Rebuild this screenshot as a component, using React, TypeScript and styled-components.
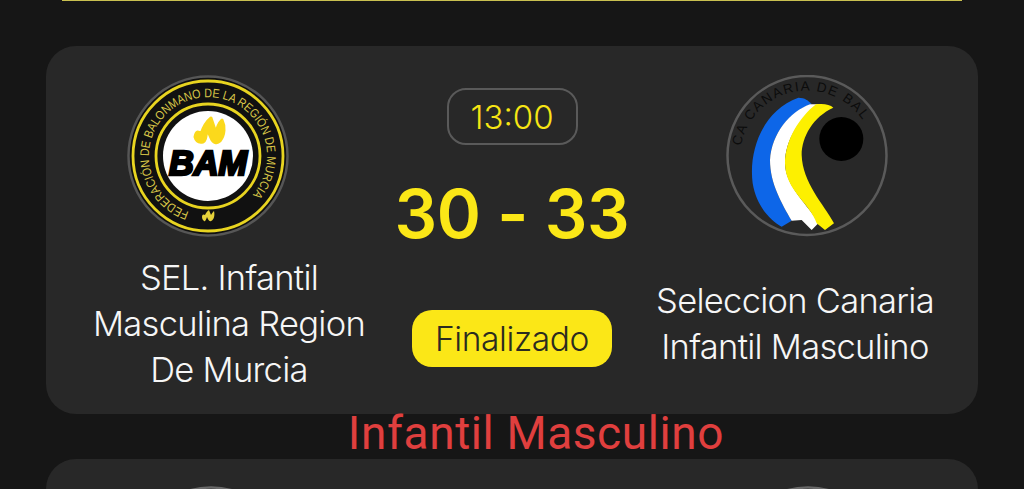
import React from 'react'
import styled, { createGlobalStyle } from 'styled-components'

const GlobalStyle = createGlobalStyle`
  html, body {
    margin: 0;
    height: 100%;
    background: #161616;
    overflow: hidden;
  }
`

const Page = styled.div`
  width: 1024px;
  height: 489px;
  overflow: hidden;
  background: #161616;
  display: flex;
  flex-direction: column;
  align-items: center;
  font-family: Inter, "Noto Sans", sans-serif;
`

// bottom edge of the card scrolled off above
const TopEdge = styled.div`
  flex-shrink: 0;
  width: 900px;
  height: 1px;
  margin-bottom: 45px;
  background: #c9c050;
`

const Card = styled.section`
  flex-shrink: 0;
  box-sizing: border-box;
  width: 932px;
  height: 368px;
  padding: 29px 30px 21px;
  background: #282828;
  border-radius: 30px;
  display: grid;
  grid-template-columns: 1fr 260px 1fr;
`

const NextCard = styled(Card)`
  padding-top: 27px;
`

const TeamColumn = styled.div`
  display: flex;
  flex-direction: column;
  align-items: center;
`

const LogoSlot = styled.div<{ $inset: number }>`
  align-self: flex-start;
  width: 162px;
  height: 162px;
  margin-left: ${(p) => p.$inset}px;
  flex-shrink: 0;
`

const TeamName = styled.div`
  height: 138px;
  margin-top: 18px;
  display: flex;
  align-items: center;
  text-align: center;
  font-size: 34.5px;
  font-weight: 300;
  line-height: 46px;
  letter-spacing: -0.72px;
  white-space: nowrap;
  color: #f6f6f6;
`

const MatchColumn = styled.div`
  display: flex;
  flex-direction: column;
  align-items: center;
  padding-top: 13px;
`

const TimeBox = styled.div`
  box-sizing: border-box;
  width: 131px;
  height: 57px;
  border: 2.5px solid #5a5a5a;
  border-radius: 19px;
  display: flex;
  align-items: center;
  justify-content: center;
  font-size: 33px;
  font-weight: 300;
  color: #f7e514;
`

const Score = styled.div`
  margin-top: 27px;
  font-size: 67px;
  line-height: 84px;
  font-weight: 600;
  letter-spacing: -0.3px;
  white-space: pre;
  color: #fbe717;
`

const StatusPill = styled.div`
  box-sizing: border-box;
  width: 200px;
  height: 57px;
  margin-top: 54px;
  border-radius: 20px;
  background: #fbe717;
  display: flex;
  align-items: center;
  justify-content: center;
  font-size: 33.5px;
  font-weight: 300;
  letter-spacing: -0.4px;
  color: #2b2b20;
`

const CategoryTitle = styled.div`
  flex-shrink: 0;
  height: 45px;
  padding-left: 48px;
  font-family: Roboto, sans-serif;
  font-size: 46px;
  line-height: 39px;
  letter-spacing: 0.6px;
  color: #e03f3e;
  white-space: nowrap;
`

const Svg = styled.svg`
  display: block;
  width: 162px;
  height: 162px;
`

const BamLogo = () => (
  <Svg viewBox="0 0 162 162">
    <defs>
      <path id="bam-arc" d="M62 137 A59 59 0 1 1 100 137" fill="none" />
    </defs>
    <circle cx="81" cy="81" r="79.5" fill="#111" stroke="#565656" strokeWidth="2.5" />
    <circle cx="81" cy="81" r="75" fill="none" stroke="#e8d420" strokeWidth="2.8" />
    <circle cx="81" cy="81" r="52" fill="none" stroke="#e8d420" strokeWidth="2.8" />
    <circle cx="81" cy="81" r="45" fill="#fff" />
    <text fontFamily="'Liberation Sans', sans-serif" fontSize="12.5" fontWeight="400" fill="#d8c648">
      <textPath href="#bam-arc" textLength="300" lengthAdjust="spacingAndGlyphs">
        FEDERACIÓN DE BALONMANO DE LA REGIÓN DE MURCIA
      </textPath>
    </text>
    <path
      d="M68 62 C69 56 71 56 74 59 C76 53 79 47 84 43 L89 58 C90 52 92 48 95 45 C98 51 98 60 93 66 C90 69 86 68 84 63 L80 54 C79 60 79 66 76 67 C71 68 69 66 68 62 Z"
      fill="#fbd91c"
      stroke="#fbd91c"
      strokeWidth="3"
      strokeLinejoin="round"
    />
    <text
      x="81"
      y="100"
      textAnchor="middle"
      fontFamily="'Liberation Sans', sans-serif"
      fontSize="35"
      fontWeight="700"
      fontStyle="italic"
      textLength="78"
      lengthAdjust="spacingAndGlyphs"
      stroke="#000"
      strokeWidth="2.6"
      fill="#000"
    >
      BAM
    </text>
    <path
      d="M75 142 C75 139 77 139 78 140 C79 138 80 136 82 135 L84 140 C85 138 86 137 87 136 C88 140 87 145 84 146 C82 147 81 144 80 142 C79 145 78 147 77 146 C76 145 75 144 75 142 Z"
      fill="#e6d23a"
    />
  </Svg>
)

const CanariaLogo = () => (
  <Svg viewBox="0 0 162 162">
    <defs>
      <path id="canaria-arc" d="M15 71 A67 67 0 0 1 147 71" fill="none" />
    </defs>
    <circle cx="81" cy="80.5" r="79.5" fill="none" stroke="#5a5a5a" strokeWidth="2.5" />
    <text fontFamily="'Liberation Sans', sans-serif" fontSize="13.5" fill="#0c0c0c" letterSpacing="1.6">
      <textPath href="#canaria-arc">CA CANARIA DE BAL</textPath>
    </text>
    <g transform="translate(-16 -15) scale(0.3333)">
      <path
        d="M265 113 C285 113 295 122 305 132 C240 155 185 220 180 300 C180 370 215 430 245 482 L215 500 C180 480 140 440 128 370 C115 270 160 150 265 113 Z"
        fill="#0d66e8"
      />
      <path
        d="M300 133 L335 133 C270 170 225 240 225 310 C225 380 300 440 325 490 L305 510 L275 480 L245 482 C215 430 180 370 180 300 C185 220 240 155 300 133 Z"
        fill="#fff"
      />
      <path
        d="M318 133 C340 130 360 133 370 143 C310 170 275 230 275 285 C278 370 340 430 372 490 L345 510 L320 490 C300 430 225 390 225 310 C225 240 270 170 318 133 Z"
        fill="#fdf000"
      />
      <circle cx="394" cy="237" r="66" fill="#000" />
    </g>
  </Svg>
)

const EmptyLogo = () => (
  <Svg viewBox="0 0 162 162">
    <circle cx="81" cy="81" r="79.5" fill="#111" stroke="#6a6a6a" strokeWidth="2.5" />
  </Svg>
)

export default function App() {
  return (
    <Page>
      <GlobalStyle />
      <TopEdge />
      <Card>
        <TeamColumn>
          <LogoSlot $inset={51}>
            <BamLogo />
          </LogoSlot>
          <TeamName>
            <span>
              SEL. Infantil
              <br />
              Masculina Region
              <br />
              De Murcia
            </span>
          </TeamName>
        </TeamColumn>
        <MatchColumn>
          <TimeBox>13:00</TimeBox>
          <Score>30 - 33</Score>
          <StatusPill>Finalizado</StatusPill>
        </MatchColumn>
        <TeamColumn>
          <LogoSlot $inset={84}>
            <CanariaLogo />
          </LogoSlot>
          <TeamName>
            <span>
              Seleccion Canaria
              <br />
              Infantil Masculino
            </span>
          </TeamName>
        </TeamColumn>
      </Card>
      <CategoryTitle>Infantil Masculino</CategoryTitle>
      <NextCard>
        <TeamColumn>
          <LogoSlot $inset={54}>
            <EmptyLogo />
          </LogoSlot>
        </TeamColumn>
        <MatchColumn />
        <TeamColumn>
          <LogoSlot $inset={85}>
            <EmptyLogo />
          </LogoSlot>
        </TeamColumn>
      </NextCard>
    </Page>
  )
}
